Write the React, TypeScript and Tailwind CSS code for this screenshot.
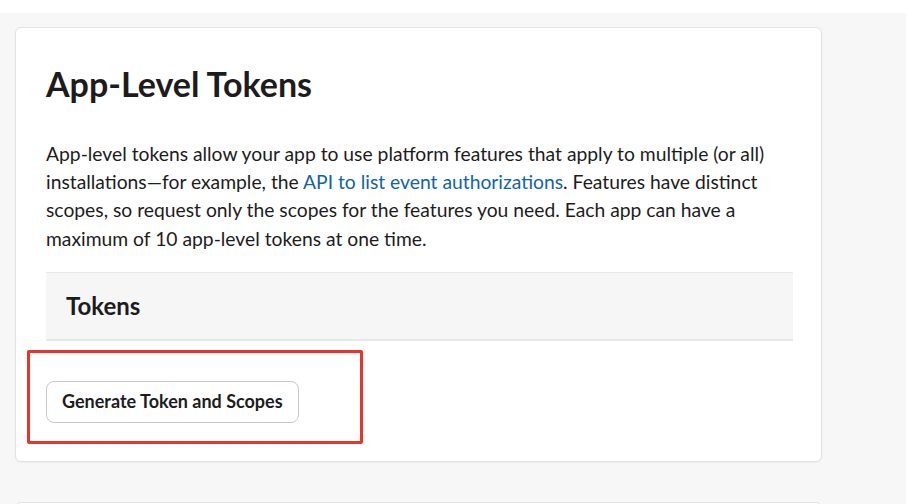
export default function App() {
  return (
    <div className="w-[924px] h-[504px] bg-white pt-[13px] overflow-hidden font-['Lato','Noto_Sans',sans-serif] text-[#1d1c1d]">
      <div className="w-[906px] h-full bg-[#f7f7f7] pl-[15px] pt-[14px] flex flex-col gap-[40px]">
        {/* App-level tokens card */}
        <section className="relative w-[807px] shrink-0 bg-white border border-[#e2e2e2] rounded-[6px] shadow-[0_1px_2px_rgba(0,0,0,0.04)] pl-[30px] pr-[28px] pt-[36px] pb-[38px]">
          <h2 className="text-[34px] leading-[1.2] font-bold">App-Level Tokens</h2>
          <p className="mt-[35px] text-[19.3px] leading-[28.3px]">
            App-level tokens allow your app to use platform features that apply to multiple (or all) installations—for example, the{" "}
            <a href="#" className="text-[#1264a3]">API to list event authorizations</a>. Features have distinct scopes, so request only the scopes for the features you need. Each app can have a maximum of 10 app-level tokens at one time.
          </p>
          <div className="mt-[19px] h-[69px] bg-[#f6f6f6] border-t border-b-2 border-[#e8e8e8] flex items-center px-[20px]">
            <h3 className="text-[24px] font-bold">Tokens</h3>
          </div>
          <button className="mt-[40px] h-[42px] px-[15px] rounded-[8px] border border-[#c9c9c9] bg-white text-[18px] font-bold text-[#1d1c1d]">
            Generate Token and Scopes
          </button>
          {/* red annotation box */}
          <div className="absolute left-[11px] top-[322px] w-[336px] h-[94px] border-[3px] border-[#e8342a] rounded-[2px]" />
        </section>
        {/* next card (cut off) */}
        <section className="w-[807px] h-[40px] shrink-0 bg-white border border-[#e2e2e2] rounded-[6px]" />
      </div>
    </div>
  );
}
